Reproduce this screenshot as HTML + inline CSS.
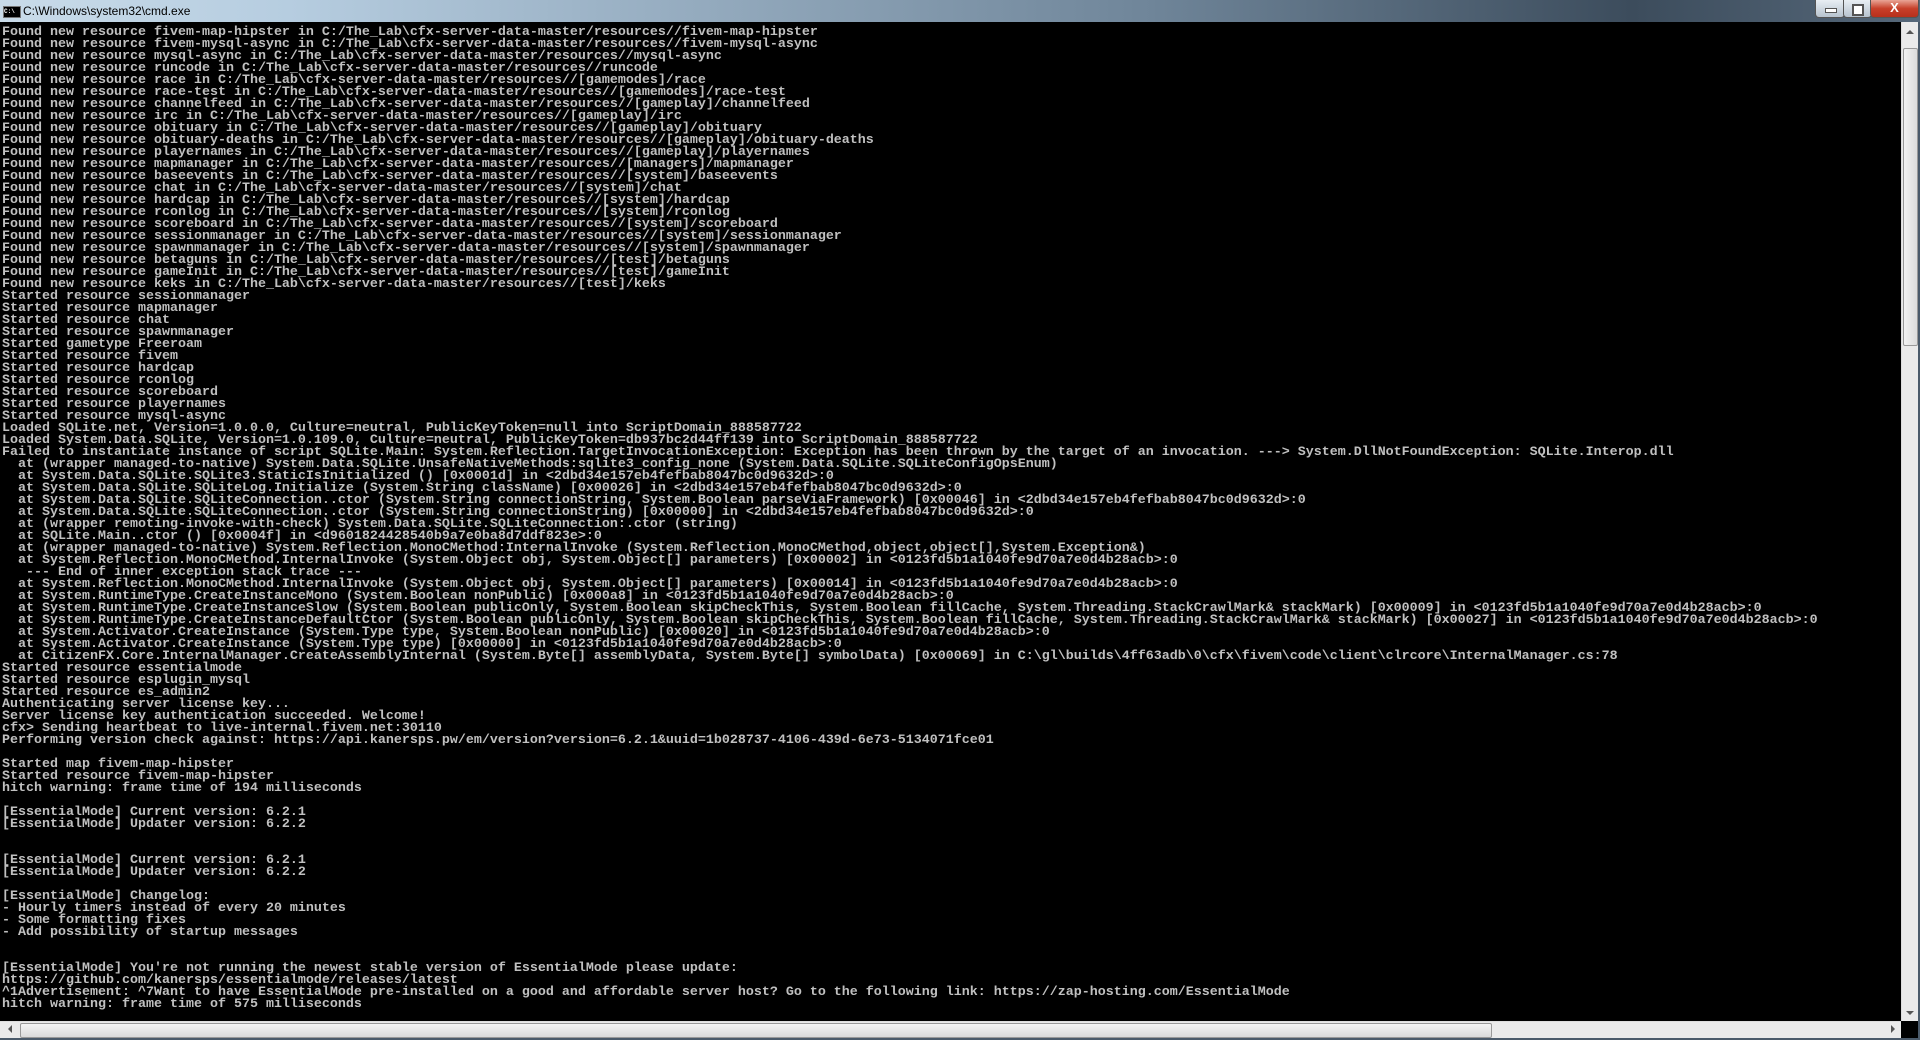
<!DOCTYPE html>
<html><head><meta charset="utf-8"><style>
html,body{margin:0;padding:0;width:1920px;height:1040px;overflow:hidden;background:#000;}
#title{position:absolute;left:0;top:0;width:1920px;height:22px;background:linear-gradient(90deg,#c9dbe9 0%,#b6cde0 15%,#6f8599 60%,#3c4c5c 85%,#56687a 100%);}
#title .t{position:absolute;left:23px;top:4px;font:12px "Liberation Sans",sans-serif;color:#000;}
#title .ic{position:absolute;left:3px;top:6px;width:16px;height:10px;background:#000;border:1px solid #777;color:#fff;font:bold 6px "Liberation Mono",monospace;line-height:10px;}
.btn{position:absolute;top:0;height:17px;border:1px solid #555;border-top:none;border-radius:0 0 4px 4px;}
pre{position:absolute;left:2px;top:27px;margin:0;font:bold 13.33px/12px "Liberation Mono",monospace;color:#c0c0c0;white-space:pre;}
#vs{position:absolute;left:1901px;top:22px;width:17px;height:999px;background:#eaeaea;border-left:1px solid #ddd;}
#vt{position:absolute;left:1903px;top:48px;width:13px;height:296px;background:linear-gradient(90deg,#f2f2f2,#dcdcdc);border:1px solid #999;border-radius:2px;}
#hs{position:absolute;left:0;top:1021px;width:1901px;height:17px;background:#eaeaea;border-top:1px solid #ddd;}
#ht{position:absolute;left:20px;top:1023px;width:1470px;height:13px;background:linear-gradient(#f4f4f4,#dadada);border:1px solid #999;border-radius:2px;}
#bb{position:absolute;left:0;top:1038px;width:1920px;height:2px;background:#4a5a6a;}
#rb{position:absolute;left:1918px;top:22px;width:2px;height:1018px;background:#4a5a6a;}
</style></head><body>
<div id="title"><div class="ic">C:\</div><div class="t">C:\Windows\system32\cmd.exe</div>
<div class="btn" style="left:1815px;width:28px;background:linear-gradient(#e8eef3,#b7c3cf);"><div style="position:absolute;left:9px;top:8px;width:10px;height:3px;background:#fff;border:1px solid #555"></div></div>
<div class="btn" style="left:1843px;width:27px;background:linear-gradient(#e8eef3,#b7c3cf);"><div style="position:absolute;left:8px;top:4px;width:8px;height:8px;border:2px solid #555;background:#fff"></div></div>
<div class="btn" style="left:1870px;width:47px;background:linear-gradient(#e9a596,#c7402a 50%,#b8301c);"><div style="position:absolute;left:0;width:47px;top:0;text-align:center;color:#fff;font:bold 13px 'Liberation Sans',sans-serif;">X</div></div>
</div>
<pre>Found new resource fivem-map-hipster in C:/The_Lab\cfx-server-data-master/resources//fivem-map-hipster
Found new resource fivem-mysql-async in C:/The_Lab\cfx-server-data-master/resources//fivem-mysql-async
Found new resource mysql-async in C:/The_Lab\cfx-server-data-master/resources//mysql-async
Found new resource runcode in C:/The_Lab\cfx-server-data-master/resources//runcode
Found new resource race in C:/The_Lab\cfx-server-data-master/resources//[gamemodes]/race
Found new resource race-test in C:/The_Lab\cfx-server-data-master/resources//[gamemodes]/race-test
Found new resource channelfeed in C:/The_Lab\cfx-server-data-master/resources//[gameplay]/channelfeed
Found new resource irc in C:/The_Lab\cfx-server-data-master/resources//[gameplay]/irc
Found new resource obituary in C:/The_Lab\cfx-server-data-master/resources//[gameplay]/obituary
Found new resource obituary-deaths in C:/The_Lab\cfx-server-data-master/resources//[gameplay]/obituary-deaths
Found new resource playernames in C:/The_Lab\cfx-server-data-master/resources//[gameplay]/playernames
Found new resource mapmanager in C:/The_Lab\cfx-server-data-master/resources//[managers]/mapmanager
Found new resource baseevents in C:/The_Lab\cfx-server-data-master/resources//[system]/baseevents
Found new resource chat in C:/The_Lab\cfx-server-data-master/resources//[system]/chat
Found new resource hardcap in C:/The_Lab\cfx-server-data-master/resources//[system]/hardcap
Found new resource rconlog in C:/The_Lab\cfx-server-data-master/resources//[system]/rconlog
Found new resource scoreboard in C:/The_Lab\cfx-server-data-master/resources//[system]/scoreboard
Found new resource sessionmanager in C:/The_Lab\cfx-server-data-master/resources//[system]/sessionmanager
Found new resource spawnmanager in C:/The_Lab\cfx-server-data-master/resources//[system]/spawnmanager
Found new resource betaguns in C:/The_Lab\cfx-server-data-master/resources//[test]/betaguns
Found new resource gameInit in C:/The_Lab\cfx-server-data-master/resources//[test]/gameInit
Found new resource keks in C:/The_Lab\cfx-server-data-master/resources//[test]/keks
Started resource sessionmanager
Started resource mapmanager
Started resource chat
Started resource spawnmanager
Started gametype Freeroam
Started resource fivem
Started resource hardcap
Started resource rconlog
Started resource scoreboard
Started resource playernames
Started resource mysql-async
Loaded SQLite.net, Version=1.0.0.0, Culture=neutral, PublicKeyToken=null into ScriptDomain_888587722
Loaded System.Data.SQLite, Version=1.0.109.0, Culture=neutral, PublicKeyToken=db937bc2d44ff139 into ScriptDomain_888587722
Failed to instantiate instance of script SQLite.Main: System.Reflection.TargetInvocationException: Exception has been thrown by the target of an invocation. ---&gt; System.DllNotFoundException: SQLite.Interop.dll
  at (wrapper managed-to-native) System.Data.SQLite.UnsafeNativeMethods:sqlite3_config_none (System.Data.SQLite.SQLiteConfigOpsEnum)
  at System.Data.SQLite.SQLite3.StaticIsInitialized () [0x0001d] in &lt;2dbd34e157eb4fefbab8047bc0d9632d&gt;:0
  at System.Data.SQLite.SQLiteLog.Initialize (System.String className) [0x00026] in &lt;2dbd34e157eb4fefbab8047bc0d9632d&gt;:0
  at System.Data.SQLite.SQLiteConnection..ctor (System.String connectionString, System.Boolean parseViaFramework) [0x00046] in &lt;2dbd34e157eb4fefbab8047bc0d9632d&gt;:0
  at System.Data.SQLite.SQLiteConnection..ctor (System.String connectionString) [0x00000] in &lt;2dbd34e157eb4fefbab8047bc0d9632d&gt;:0
  at (wrapper remoting-invoke-with-check) System.Data.SQLite.SQLiteConnection:.ctor (string)
  at SQLite.Main..ctor () [0x0004f] in &lt;d9601824428540b9a7e0ba8d7ddf823e&gt;:0
  at (wrapper managed-to-native) System.Reflection.MonoCMethod:InternalInvoke (System.Reflection.MonoCMethod,object,object[],System.Exception&amp;)
  at System.Reflection.MonoCMethod.InternalInvoke (System.Object obj, System.Object[] parameters) [0x00002] in &lt;0123fd5b1a1040fe9d70a7e0d4b28acb&gt;:0
   --- End of inner exception stack trace ---
  at System.Reflection.MonoCMethod.InternalInvoke (System.Object obj, System.Object[] parameters) [0x00014] in &lt;0123fd5b1a1040fe9d70a7e0d4b28acb&gt;:0
  at System.RuntimeType.CreateInstanceMono (System.Boolean nonPublic) [0x000a8] in &lt;0123fd5b1a1040fe9d70a7e0d4b28acb&gt;:0
  at System.RuntimeType.CreateInstanceSlow (System.Boolean publicOnly, System.Boolean skipCheckThis, System.Boolean fillCache, System.Threading.StackCrawlMark&amp; stackMark) [0x00009] in &lt;0123fd5b1a1040fe9d70a7e0d4b28acb&gt;:0
  at System.RuntimeType.CreateInstanceDefaultCtor (System.Boolean publicOnly, System.Boolean skipCheckThis, System.Boolean fillCache, System.Threading.StackCrawlMark&amp; stackMark) [0x00027] in &lt;0123fd5b1a1040fe9d70a7e0d4b28acb&gt;:0
  at System.Activator.CreateInstance (System.Type type, System.Boolean nonPublic) [0x00020] in &lt;0123fd5b1a1040fe9d70a7e0d4b28acb&gt;:0
  at System.Activator.CreateInstance (System.Type type) [0x00000] in &lt;0123fd5b1a1040fe9d70a7e0d4b28acb&gt;:0
  at CitizenFX.Core.InternalManager.CreateAssemblyInternal (System.Byte[] assemblyData, System.Byte[] symbolData) [0x00069] in C:\gl\builds\4ff63adb\0\cfx\fivem\code\client\clrcore\InternalManager.cs:78
Started resource essentialmode
Started resource esplugin_mysql
Started resource es_admin2
Authenticating server license key...
Server license key authentication succeeded. Welcome!
cfx&gt; Sending heartbeat to live-internal.fivem.net:30110
Performing version check against: https://api.kanersps.pw/em/version?version=6.2.1&amp;uuid=1b028737-4106-439d-6e73-5134071fce01

Started map fivem-map-hipster
Started resource fivem-map-hipster
hitch warning: frame time of 194 milliseconds

[EssentialMode] Current version: 6.2.1
[EssentialMode] Updater version: 6.2.2


[EssentialMode] Current version: 6.2.1
[EssentialMode] Updater version: 6.2.2

[EssentialMode] Changelog:
- Hourly timers instead of every 20 minutes
- Some formatting fixes
- Add possibility of startup messages


[EssentialMode] You're not running the newest stable version of EssentialMode please update:
https://github.com/kanersps/essentialmode/releases/latest
^1Advertisement: ^7Want to have EssentialMode pre-installed on a good and affordable server host? Go to the following link: https://zap-hosting.com/EssentialMode
hitch warning: frame time of 575 milliseconds</pre>
<div id="vs"></div><div id="vt"></div>
<div id="hs"></div><div id="ht"></div>
<div style="position:absolute;left:8px;top:1025px;width:0;height:0;border:4px solid transparent;border-right:4px solid #555;border-left:none"></div>
<div style="position:absolute;left:1891px;top:1025px;width:0;height:0;border:4px solid transparent;border-left:4px solid #555;border-right:none"></div>
<div style="position:absolute;left:1906px;top:30px;width:0;height:0;border:4px solid transparent;border-bottom:4px solid #555;border-top:none"></div>
<div style="position:absolute;left:1906px;top:1011px;width:0;height:0;border:4px solid transparent;border-top:4px solid #555;border-bottom:none"></div>
<div id="rb"></div><div id="bb"></div>
</body></html>
